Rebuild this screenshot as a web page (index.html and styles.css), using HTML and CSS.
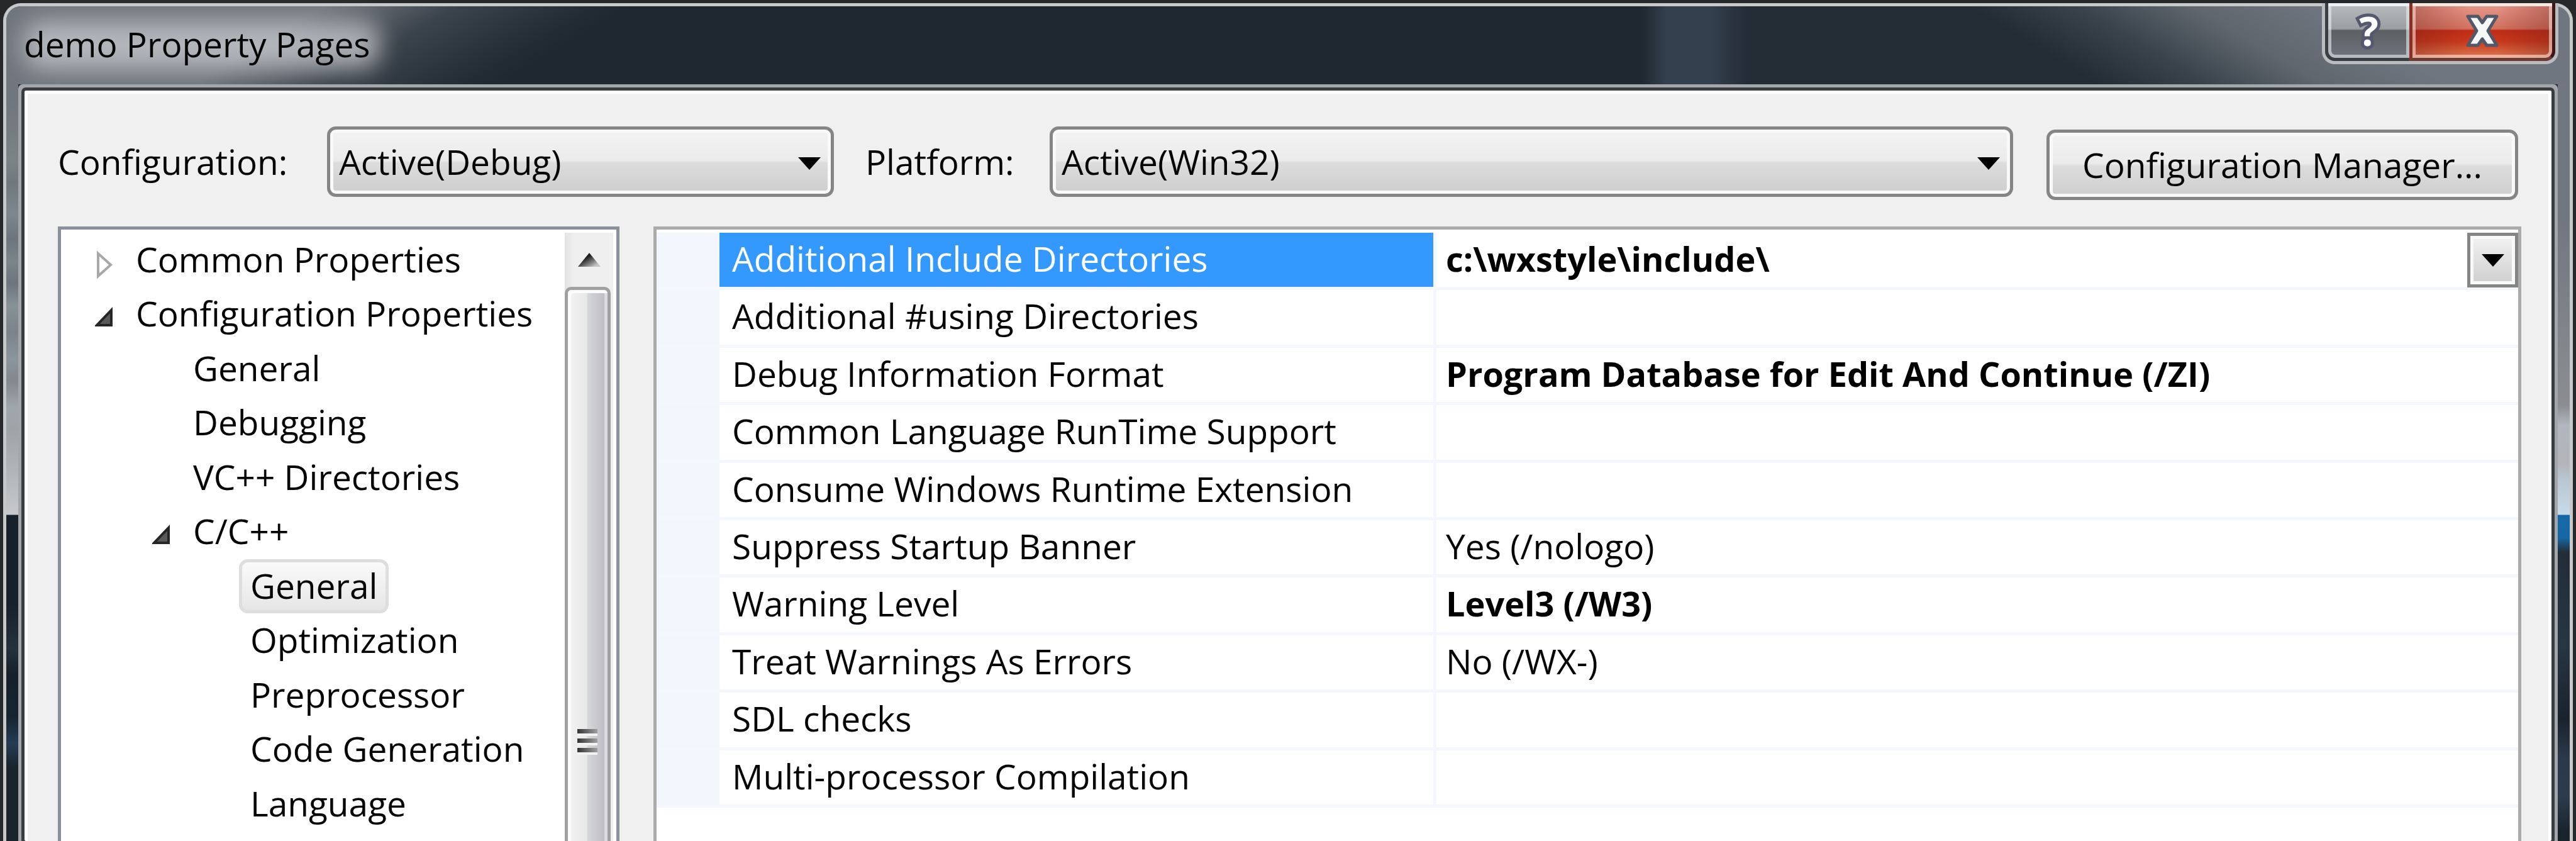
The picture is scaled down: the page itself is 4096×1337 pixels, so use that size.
FILE: index.html
```html
<!DOCTYPE html>
<html lang="en">
<head>
<meta charset="utf-8">
<title>demo Property Pages</title>
<link rel="stylesheet" href="styles.css">
</head>
<body>
<main class="window">
  <header class="titlebar">
    <h1 class="title">demo Property Pages</h1>
    <div class="caption">
      <button class="caption-btn help" type="button" aria-label="Help">?</button>
      <button class="caption-btn close" type="button" aria-label="Close">
        <svg width="54" height="52" viewBox="0 0 54 52" aria-hidden="true">
          <path d="M4 3H20L27 13L34 3H50L36 26L50 49H34L27 39L20 49H4L18 26Z" fill="#f6f7f7" stroke="#50586a" stroke-width="5" stroke-linejoin="round"/>
        </svg>
      </button>
    </div>
  </header>

  <section class="client">
    <form class="toolbar">
      <label class="config-label" for="config">Configuration:</label>
      <div class="combo config-combo">
        <select id="config"><option>Active(Debug)</option></select>
        <svg class="combo-arrow" viewBox="0 0 36 20" aria-hidden="true"><path d="M0 0H36L18 20Z"/></svg>
      </div>
      <label class="platform-label" for="platform">Platform:</label>
      <div class="combo platform-combo">
        <select id="platform"><option>Active(Win32)</option></select>
        <svg class="combo-arrow" viewBox="0 0 36 20" aria-hidden="true"><path d="M0 0H36L18 20Z"/></svg>
      </div>
      <button class="manager" type="button">Configuration Manager...</button>
    </form>

    <div class="panels">
      <nav class="tree-panel" aria-label="Property categories">
        <ul class="tree">
          <li class="level-0">
            <svg class="expander" viewBox="0 0 28 86" aria-hidden="true"><path d="M5 33V69L25 51Z" fill="#fff" stroke="#a8a8a8" stroke-width="4"/></svg>
            <span class="item">Common Properties</span>
          </li>
          <li class="level-0">
            <svg class="expander" viewBox="0 0 28 86" aria-hidden="true"><path d="M26 37V61H3Z" fill="#595959" stroke="#262626" stroke-width="4"/></svg>
            <span class="item">Configuration Properties</span>
          </li>
          <li class="level-1"><span class="item leaf">General</span></li>
          <li class="level-1"><span class="item leaf">Debugging</span></li>
          <li class="level-1"><span class="item leaf">VC++ Directories</span></li>
          <li class="level-1">
            <svg class="expander" viewBox="0 0 28 86" aria-hidden="true"><path d="M26 37V61H3Z" fill="#595959" stroke="#262626" stroke-width="4"/></svg>
            <span class="item">C/C++</span>
          </li>
          <li class="level-2"><span class="item leaf selected">General</span></li>
          <li class="level-2"><span class="item leaf">Optimization</span></li>
          <li class="level-2"><span class="item leaf">Preprocessor</span></li>
          <li class="level-2"><span class="item leaf">Code Generation</span></li>
          <li class="level-2"><span class="item leaf">Language</span></li>
        </ul>
        <div class="scrollbar">
          <button class="scroll-up" type="button" aria-label="Scroll up">
            <svg width="36" height="22" viewBox="0 0 36 22" aria-hidden="true">
              <defs><linearGradient id="up" x1="0" y1="0" x2="1" y2="1"><stop offset=".35" stop-color="#1c1c1c"/><stop offset=".85" stop-color="#c4c4c4"/></linearGradient></defs>
              <path d="M18 0L36 22H0Z" fill="url(#up)"/>
            </svg>
          </button>
          <div class="thumb">
            <div class="grip"><i></i><i></i><i></i></div>
          </div>
        </div>
      </nav>

      <div class="grid-panel">
        <table class="grid">
          <colgroup><col class="col-gutter"><col class="col-name"><col></colgroup>
          <tbody>
            <tr class="current"><td class="gutter"></td><th scope="row">Additional Include Directories</th>
              <td class="changed">
                <div class="editor">
                  <span>c:\wxstyle\include\</span>
                  <button class="drop" type="button" aria-label="Edit value"><svg width="36" height="20" viewBox="0 0 36 20" aria-hidden="true"><path d="M0 0H36L18 20Z"/></svg></button>
                </div>
              </td></tr>
            <tr><td class="gutter"></td><th scope="row">Additional #using Directories</th><td></td></tr>
            <tr><td class="gutter"></td><th scope="row">Debug Information Format</th><td class="changed">Program Database for Edit And Continue (/ZI)</td></tr>
            <tr><td class="gutter"></td><th scope="row">Common Language RunTime Support</th><td></td></tr>
            <tr><td class="gutter"></td><th scope="row">Consume Windows Runtime Extension</th><td></td></tr>
            <tr><td class="gutter"></td><th scope="row">Suppress Startup Banner</th><td>Yes (/nologo)</td></tr>
            <tr><td class="gutter"></td><th scope="row">Warning Level</th><td class="changed">Level3 (/W3)</td></tr>
            <tr><td class="gutter"></td><th scope="row">Treat Warnings As Errors</th><td>No (/WX-)</td></tr>
            <tr><td class="gutter"></td><th scope="row">SDL checks</th><td></td></tr>
            <tr><td class="gutter"></td><th scope="row">Multi-processor Compilation</th><td></td></tr>
          </tbody>
        </table>
      </div>
    </div>
  </section>
</main>
</body>
</html>
```

FILE: styles.css
```css
* { box-sizing: border-box; }

body {
  margin: 0;
  min-height: 100vh;
  display: flex;
  flex-direction: column;
  background: #262829;
  color: #050505;
  font-family: "Open Sans", "Noto Sans", sans-serif;
  font-size: 55px;
  line-height: 82px;
  white-space: nowrap;
}

button, select { font: inherit; color: inherit; }
svg { display: block; }

/* Glass frame */
.window {
  position: relative;
  flex: 1;
  display: flex;
  flex-direction: column;
  margin: 5px 5px 0;
  padding: 0 19px;
  border: 5px solid #c6c8ca;
  border-bottom: 0;
  border-radius: 28px 28px 0 0;
  background:
    linear-gradient(#70767e 150px, #7b8384 246px, #70787e 280px, #7d878d 331px, #6e747d 370px, #7b858a 405px, #6e747d 440px, #879297 476px, #7c828a 518px, #8b959d 561px, #84878e 595px, #9fa7ac 638px, #9fa3a6 672px, #c6c8ca 808px, #17212b 809px, #17212b 950px, #25313b 1021px, #152029 1064px, #172430 1130px, #243d55 1171px, #1a242d 1209px) left / 19px 100% no-repeat,
    linear-gradient(#717781 339px, #8b8d90 634px, #b1b6bf 666px, #b4b5ba 728px, #b8c6d2 751px, #c8dae8 808px, #1668a8 809px, #1668a4 845px, #222d38 868px, #283543 1016px, #1a232c 1133px, #2c394a 1195px, #2e3b4c 1257px, #18232c 1312px) right / 19px 100% no-repeat,
    #1f2730;
}

.titlebar {
  height: 124px;
  margin: 0 -19px;
  padding-left: 28px;
  border-radius: 23px 23px 0 0;
  background:
    linear-gradient(149deg, #70767e 260px, #565d65 319px, #3a424b 370px, #232b34 480px, transparent 510px) left / 1100px 100% no-repeat,
    linear-gradient(31deg, transparent 180px, #3a434c 270px, #5f666e 363px, #70767f 470px) right / 1100px 100% no-repeat,
    linear-gradient(90deg, #1f2730 2600px, #33404e 2640px, #33404e 2710px, #232b35 2770px);
}

.title {
  position: relative;
  z-index: 0;
  width: fit-content;
  margin: 0;
  font-size: 55px;
  font-weight: 400;
  line-height: 120px;
}

.title::before {
  content: "";
  position: absolute;
  z-index: -1;
  inset: 24px -16px 20px 0;
  border-radius: 30px;
  background: rgba(205, 207, 210, .72);
  filter: blur(18px);
}

.caption {
  position: absolute;
  top: -5px;
  right: 18px;
  display: flex;
  width: 376px;
  height: 97px;
  border: 5px solid #b9bdc0;
  border-top: 0;
  border-radius: 0 0 20px 20px;
}

.caption-btn {
  display: flex;
  align-items: center;
  justify-content: center;
  padding: 0;
  border: 0 solid #3c3f41;
}

.help {
  width: 134px;
  border-width: 0 0 5px 5px;
  border-bottom-left-radius: 16px;
  background: linear-gradient(#b9bdc0, #9b9fa2 47%, #5b6062 50%, #70747f);
  box-shadow: inset 0 0 0 5px rgba(232, 238, 242, .6), inset 0 5px #f4f5f5;
  color: #fff;
  font-size: 64px;
  font-weight: 700;
  line-height: 86px;
  -webkit-text-stroke: 10px #55586e;
  paint-order: stroke fill;
}

.close {
  flex: 1;
  border-color: #642c24 #3f1814 #6e3a30 #8c2f24;
  border-width: 0 5px 5px;
  border-bottom-right-radius: 16px;
  background:
    linear-gradient(90deg, rgba(110, 30, 25, .35), transparent 40%, transparent 60%, rgba(110, 30, 25, .35)),
    linear-gradient(#e69a8c, #d2715f 47%, #c02c16 50%, #c9391c 70%, #dd7a54);
  box-shadow: inset 0 0 0 5px rgba(255, 225, 218, .6), inset 0 5px #fdeeeb;
}

/* Dialog body */
.client {
  position: relative;
  z-index: 1;
  flex: 1;
  display: flex;
  flex-direction: column;
  gap: 42px;
  padding: 52px 43px 0 48px;
  border: 5px solid #fff;
  border-bottom: 0;
  outline: 5px solid #3a3d40;
  box-shadow: 0 0 0 10px #a3a7ab;
  border-radius: 2px;
  margin: 10px 10px 0;
  background: #f0f0f0;
}

.toolbar {
  display: flex;
  align-items: flex-start;
  padding-right: 5px;
  line-height: 112px;
}

.config-label { width: 428px; }
.platform-label { width: 293px; margin-left: 50px; }
.combo { position: relative; }
.config-combo { width: 806px; }
.platform-combo { flex: 1; }

.combo select,
.manager {
  display: block;
  width: 100%;
  height: 112px;
  padding: 0 14px;
  border: 5px solid #858585;
  border-radius: 14px;
  background: linear-gradient(#f3f3f3, #ebebeb 48%, #dcdcdc 52%, #cecece);
  box-shadow: inset 0 0 0 5px #f9f9f9;
  line-height: 100px;
  appearance: none;
}

.combo-arrow {
  position: absolute;
  top: 49px;
  right: 21px;
  width: 36px;
  height: 20px;
}

.manager {
  width: 750px;
  margin: 5px 0 0 53px;
  text-align: center;
}

.panels {
  flex: 1;
  display: flex;
  gap: 54px;
}

/* Category tree */
.tree-panel {
  display: flex;
  width: 893px;
  padding: 5px 5px 0 0;
  border: 5px solid #8b919c;
  border-bottom: 0;
  background: #fff;
}

.tree {
  flex: 1;
  display: grid;
  grid-template-rows: repeat(11, 1fr);
  height: 951px;
  margin: 0;
  padding: 0;
  list-style: none;
}

.tree li { display: flex; }
.level-0 { padding-left: 54px; }
.level-1 { padding-left: 145px; }
.level-2 { padding-left: 236px; }

.expander {
  width: 28px;
  height: 86px;
  margin-right: 19px;
}

.item {
  height: 86px;
  padding: 0 13px;
  border: 5px solid transparent;
  border-radius: 14px;
  line-height: 74px;
}

.leaf { margin-left: 47px; }

.selected {
  border-color: #dedede;
  background: linear-gradient(#fafafa, #e6e6e6);
}

.scrollbar {
  display: flex;
  flex-direction: column;
  width: 77px;
  background: linear-gradient(90deg, #e3e3e3, #efefef 20%);
}

.scroll-up {
  display: flex;
  justify-content: center;
  height: 86px;
  padding: 32px 0 0;
  border: 0;
  background: none;
}

.thumb {
  flex: 1;
  width: 73px;
  padding-top: 698px;
  border: 5px solid #a0a0a0;
  border-bottom: 0;
  border-radius: 10px 10px 0 0;
  background: linear-gradient(90deg, #f3f3f3, #e8e8e9 47%, #d5d7d9 50%, #bfbec4 92%);
  box-shadow: inset 5px 5px #fbfbfb, inset -5px 0 #dcdcde;
}

.grip {
  display: flex;
  flex-direction: column;
  gap: 8px;
  width: 32px;
  margin-left: 15px;
}

.grip i {
  height: 7px;
  background: linear-gradient(90deg, #333, #a0a0a0);
  box-shadow: 0 4px #f2f2f2;
}

/* Property grid */
.grid-panel {
  flex: 1;
  padding-top: 5px;
  border: 5px solid #ababab;
  border-bottom: 0;
  background: #fff;
}

.grid {
  width: 100%;
  height: 914px;
  table-layout: fixed;
  border-spacing: 0;
}

.col-gutter { width: 100px; }
.col-name { width: 1140px; }

.grid th,
.grid td {
  padding: 0 0 0 15px;
  border-bottom: 5px solid #f4f7fd;
  text-align: left;
  vertical-align: top;
  font-weight: 400;
}

.grid th {
  padding-left: 20px;
  border-right: 5px solid #f4f7fd;
}

.grid .gutter {
  padding: 0;
  background: #f3f7fd;
}

.grid .changed {
  color: #000;
  font-size: 54px;
  font-weight: 700;
}

.current th {
  background: #39f;
  background-clip: padding-box;
  color: #fff;
}

.editor {
  display: flex;
  align-items: flex-start;
  justify-content: space-between;
  height: 82px;
}

.drop {
  display: flex;
  align-items: center;
  justify-content: center;
  width: 81px;
  height: 87px;
  padding: 0;
  border: 5px solid #858585;
  background: linear-gradient(#f3f3f3, #cecece);
  box-shadow: inset 0 0 0 5px #f9f9f9;
}
```
